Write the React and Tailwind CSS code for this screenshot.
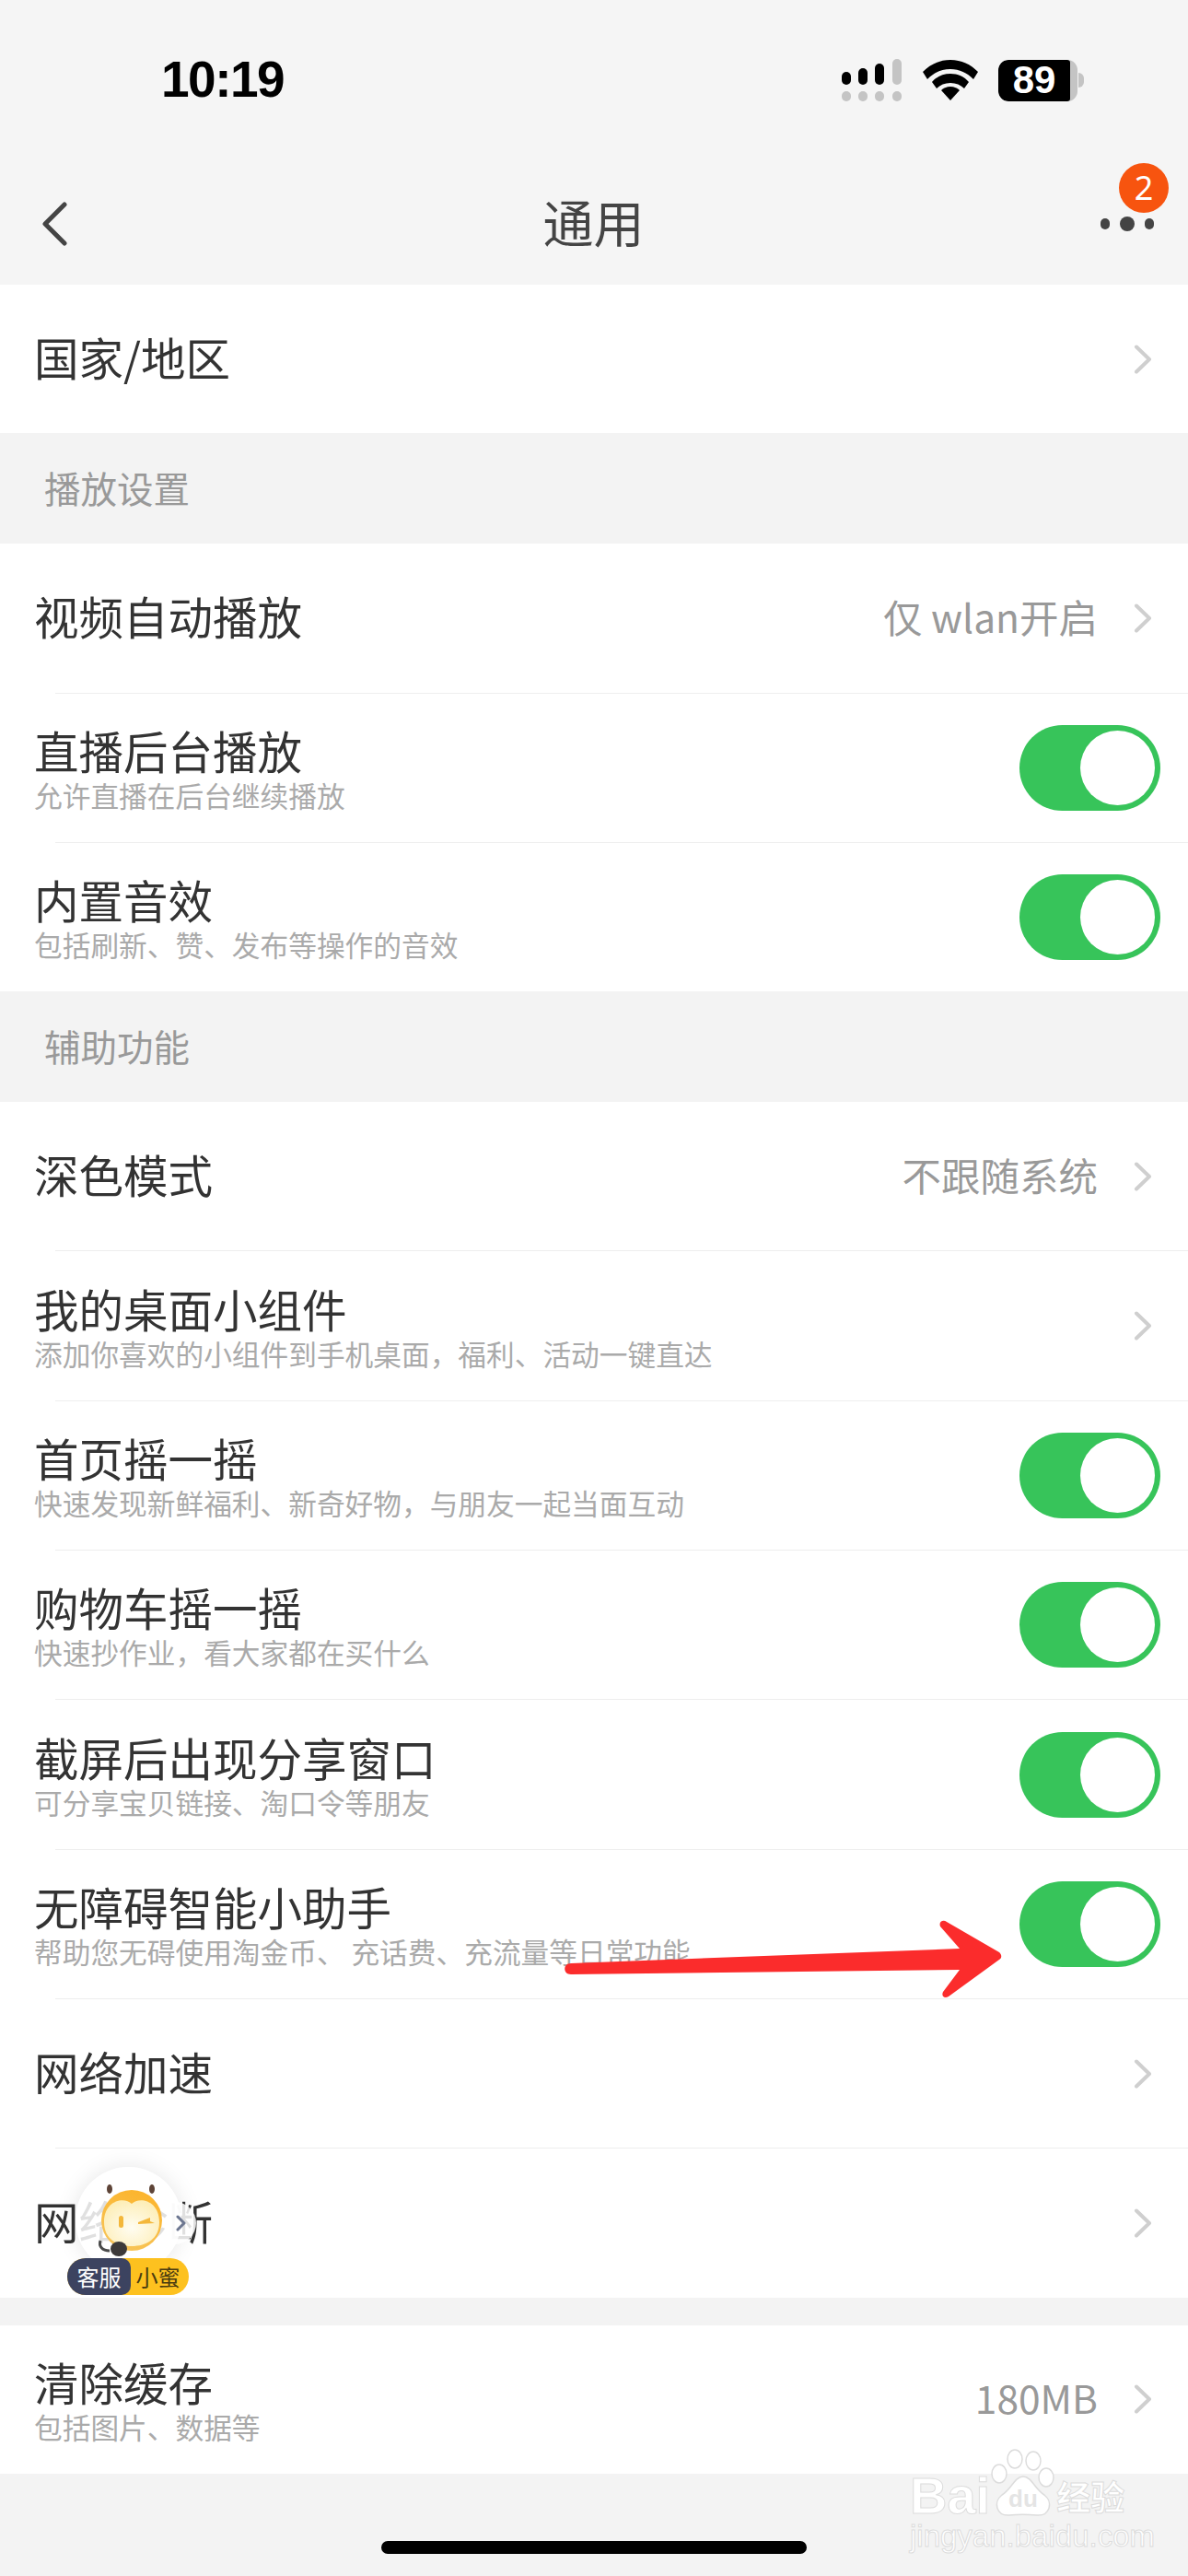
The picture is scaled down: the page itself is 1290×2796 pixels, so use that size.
import React from 'react';

const Chevron = () => (
  <svg width="20" height="32" viewBox="0 0 20 32" fill="none" className="shrink-0">
    <path d="M3 2.5 L17 16 L3 29.5" stroke="#cfcfcf" strokeWidth="4" strokeLinecap="round" strokeLinejoin="round" />
  </svg>
);

const Toggle = () => (
  <div className="w-[153px] h-[93px] rounded-full bg-[#37c45a] flex items-center justify-end pr-[6px] shrink-0">
    <div className="w-[81px] h-[81px] rounded-full bg-white" />
  </div>
);

const Divider = () => <div className="ml-[60px] h-px bg-[#eeeeee]" />;

const Row = ({ title, sub, value, toggle }) => (
  <div className={`h-[161.3px] flex items-center justify-between pl-[37px] ${toggle ? 'pr-[30px]' : 'pr-[39px]'}`}>
    <div className="flex flex-col min-w-0">
      <div className={`text-[48.5px] leading-[56px] text-[#333333] ${sub ? '' : 'pb-[6px]'}`}>{title}</div>
      {sub && <div className="text-[30.7px] leading-[36px] mt-[3px] text-[#aaaaaa] whitespace-nowrap">{sub}</div>}
    </div>
    {toggle ? (
      <Toggle />
    ) : (
      <div className="flex items-center gap-[39px]">
        {value && <span className="text-[42.5px] text-[#999999] pb-[4px]">{value}</span>}
        <Chevron />
      </div>
    )}
  </div>
);

const Section = ({ label }) => (
  <div className="h-[120px] flex items-center pl-[48px] pb-[3px] text-[39.5px] text-[#999999]">{label}</div>
);

const Signal = () => (
  <svg width="66" height="46" viewBox="0 0 66 46">
    <rect x="0" y="14" width="10" height="14" rx="5" fill="#000" />
    <rect x="18" y="10" width="10" height="18" rx="5" fill="#000" />
    <rect x="36" y="5" width="10" height="23" rx="5" fill="#000" />
    <rect x="55" y="0" width="10" height="28" rx="5" fill="#c4c4c4" />
    <rect x="0" y="35" width="10" height="11" rx="5" fill="#c4c4c4" />
    <rect x="18" y="35" width="10" height="11" rx="5" fill="#c4c4c4" />
    <rect x="36" y="35" width="10" height="11" rx="5" fill="#c4c4c4" />
    <rect x="55" y="35" width="10" height="11" rx="5" fill="#c4c4c4" />
  </svg>
);

const Wifi = () => (
  <svg width="60" height="44" viewBox="0 0 60 44">
    <path d="M30 0 C18 0 8 5 0 13 L5 21 C12 14 20 10 30 10 C40 10 48 14 55 21 L60 13 C52 5 42 0 30 0 Z" fill="#000" />
    <path d="M30 15 C22 15 15 18 10 24 L15 31 C19 27 24 25 30 25 C36 25 41 27 45 31 L50 24 C45 18 38 15 30 15 Z" fill="#000" />
    <path d="M30 29 C26 29 22 31 20 33 L30 44 L40 33 C38 31 34 29 30 29 Z" fill="#000" />
  </svg>
);

const Battery = () => (
  <div className="flex items-center">
    <div className="w-[86px] h-[45px] rounded-[11px] bg-[#c4c4c4] overflow-hidden">
      <div className="w-[78px] h-full bg-black rounded-[11px] rounded-r-[3px] flex items-center justify-center text-white text-[42px] font-bold leading-none font-['Liberation_Sans',sans-serif]">
        89
      </div>
    </div>
    <div className="w-[6px] h-[16px] ml-[1px] bg-[#c4c4c4] rounded-r-full" />
  </div>
);

const Mascot = () => (
  <div className="absolute left-[73px] top-[2352px] w-[140px] h-[140px]">
    <div className="absolute left-[9px] top-0 w-[115px] h-[115px] rounded-full bg-white/85 shadow-[0_0_24px_rgba(0,0,0,0.1)]" />
    <div className="absolute left-[108px] top-[38px] w-[32px] h-[46px] rounded-r-full bg-white/85 flex items-center justify-center">
      <svg width="12" height="18" viewBox="0 0 12 18" fill="none">
        <path d="M2 2 L9 9 L2 16" stroke="#6c7690" strokeWidth="3" strokeLinecap="round" strokeLinejoin="round" />
      </svg>
    </div>
    <svg className="absolute left-[30px] top-[16px]" width="80" height="84" viewBox="0 0 80 84">
      <defs>
        <linearGradient id="head" x1="0.7" y1="0" x2="0.3" y2="1">
          <stop offset="0" stopColor="#fcb42c" />
          <stop offset="1" stopColor="#f7c55a" />
        </linearGradient>
        <radialGradient id="face" cx="0.5" cy="0.6" r="0.6">
          <stop offset="0" stopColor="#fffdf2" />
          <stop offset="1" stopColor="#fdeeb8" />
        </radialGradient>
      </defs>
      <ellipse cx="16" cy="8" rx="3" ry="5" fill="#5e4438" />
      <ellipse cx="62" cy="8" rx="3" ry="5" fill="#5e4438" />
      <circle cx="40" cy="42" r="33" fill="url(#head)" />
      <path d="M40 24 C32 16 10 20 10 44 C10 62 24 70 40 70 C56 70 70 62 70 44 C70 20 48 16 40 24 Z" fill="url(#face)" />
      <rect x="26" y="37" width="5" height="13" rx="2.5" fill="#f4b73a" />
      <path d="M47 44 L60 39 L60 43 L65 45 L47 46 Z" fill="#f4b73a" />
      <path d="M6 64 C4 70 8 75 16 75" stroke="#4a4a4a" strokeWidth="3" fill="none" />
      <ellipse cx="26" cy="73" rx="9" ry="8" fill="#3d3a3a" />
    </svg>
    <div className="absolute left-0 top-[99px] w-[132px] h-[40px] rounded-full overflow-hidden flex text-[24px] leading-[40px] bg-[#fdc11f]">
      <div className="w-[69px] bg-[#3c4360] text-white text-center rounded-r-[10px]">客服</div>
      <div className="flex-1 text-[#4a3b10] text-center pr-[4px]">小蜜</div>
    </div>
  </div>
);

const Arrow = () => (
  <svg className="absolute left-[600px] top-[2075px]" width="500" height="105" viewBox="600 2075 500 105">
    <path
      d="M620 2131 L1042 2115 L1021 2091 C1019 2086 1024 2083 1028 2086 L1085 2119 C1088 2122 1088 2125 1085 2127 L1030 2167 C1025 2170 1022 2166 1024 2162 L1042 2138 L620 2143 C611 2143 611 2131 620 2131 Z"
      fill="#fb2c2c"
    />
  </svg>
);

const Watermark = () => (
  <div className="absolute left-[988px] top-[2656px] w-[236px] text-white">
    <div className="relative h-[76px] flex items-end">
      <span className="text-[56px] leading-[46px] font-bold font-['Liberation_Sans',sans-serif] [-webkit-text-stroke:1px_#dcdcdc]">Bai</span>
      <svg className="mx-[1px] shrink-0" width="70" height="74" viewBox="0 0 70 74">
        <g fill="#fff" stroke="#dcdcdc" strokeWidth="1.5">
          <ellipse cx="9" cy="27" rx="8" ry="10" />
          <ellipse cx="26" cy="11" rx="8" ry="10" />
          <ellipse cx="46" cy="13" rx="8" ry="10" />
          <ellipse cx="60" cy="31" rx="8" ry="10" />
          <path d="M35 30 C26 30 22 44 12 50 C2 58 6 73 20 72 C28 71 40 71 50 72 C64 73 68 58 58 50 C48 44 44 30 35 30 Z" />
        </g>
        <text x="35" y="63" textAnchor="middle" fontSize="26" fontWeight="700" fontFamily="Liberation Sans" fill="#e4e4e4">du</text>
      </svg>
      <span className="text-[37px] leading-[46px] font-bold [-webkit-text-stroke:1px_#dcdcdc] whitespace-nowrap">经验</span>
    </div>
    <div className="text-[33px] leading-[36px] mt-[3px] font-['Liberation_Sans',sans-serif] [-webkit-text-stroke:1px_#dcdcdc] whitespace-nowrap">
      jingyan.baidu.com
    </div>
  </div>
);

export default function App() {
  return (
    <div className="relative w-[1290px] h-[2796px] overflow-hidden bg-[#f3f3f3] font-['Noto_Sans_CJK_SC','Noto_Sans',sans-serif]">
      <header className="h-[309px] bg-[#f5f5f5]">
        <div className="h-[177px] pt-[64px] pl-[175px] pr-[113px] flex items-start justify-between">
          <span className="text-[55px] leading-[45px] font-bold tracking-[-1.5px] text-black font-['Liberation_Sans',sans-serif]">10:19</span>
          <div className="flex items-center gap-[22px]">
            <Signal />
            <Wifi />
            <Battery />
          </div>
        </div>
        <div className="relative h-[132px] flex items-center justify-between pl-[44px] pr-[37px]">
          <svg width="30" height="48" viewBox="0 0 30 48" fill="none">
            <path d="M26 3 L5 24 L26 45" stroke="#444444" strokeWidth="5" strokeLinecap="round" strokeLinejoin="round" />
          </svg>
          <span className="text-[55px] leading-none text-[#444444] pb-[8px] ml-[20px]">通用</span>
          <div className="relative flex items-center gap-[11px]">
            <span className="w-[10px] h-[12px] rounded-full bg-[#444444]" />
            <span className="w-[16px] h-[16px] rounded-full bg-[#444444]" />
            <span className="w-[10px] h-[12px] rounded-full bg-[#444444]" />
            <span className="absolute -right-[16px] -top-[58px] w-[54px] h-[54px] rounded-full bg-[#f7540f] text-white text-[36px] leading-[54px] text-center font-['Noto_Sans',sans-serif]">
              2
            </span>
          </div>
        </div>
      </header>

      <div className="bg-white">
        <Row title="国家/地区" />
      </div>

      <Section label="播放设置" />
      <div className="bg-white">
        <Row title="视频自动播放" value="仅 wlan开启" />
        <Divider />
        <Row title="直播后台播放" sub="允许直播在后台继续播放" toggle />
        <Divider />
        <Row title="内置音效" sub="包括刷新、赞、发布等操作的音效" toggle />
      </div>

      <Section label="辅助功能" />
      <div className="bg-white">
        <Row title="深色模式" value="不跟随系统" />
        <Divider />
        <Row title="我的桌面小组件" sub="添加你喜欢的小组件到手机桌面，福利、活动一键直达" />
        <Divider />
        <Row title="首页摇一摇" sub="快速发现新鲜福利、新奇好物，与朋友一起当面互动" toggle />
        <Divider />
        <Row title="购物车摇一摇" sub="快速抄作业，看大家都在买什么" toggle />
        <Divider />
        <Row title="截屏后出现分享窗口" sub="可分享宝贝链接、淘口令等朋友" toggle />
        <Divider />
        <Row title="无障碍智能小助手" sub="帮助您无碍使用淘金币、 充话费、充流量等日常功能" toggle />
        <Divider />
        <Row title="网络加速" />
        <Divider />
        <Row title="网络诊断" />
      </div>

      <div className="h-[30px]" />
      <div className="bg-white">
        <Row title="清除缓存" sub="包括图片、数据等" value="180MB" />
      </div>

      <div className="absolute left-[414px] top-[2758px] w-[462px] h-[14px] rounded-full bg-black" />
      <Mascot />
      <Arrow />
      <Watermark />
    </div>
  );
}
